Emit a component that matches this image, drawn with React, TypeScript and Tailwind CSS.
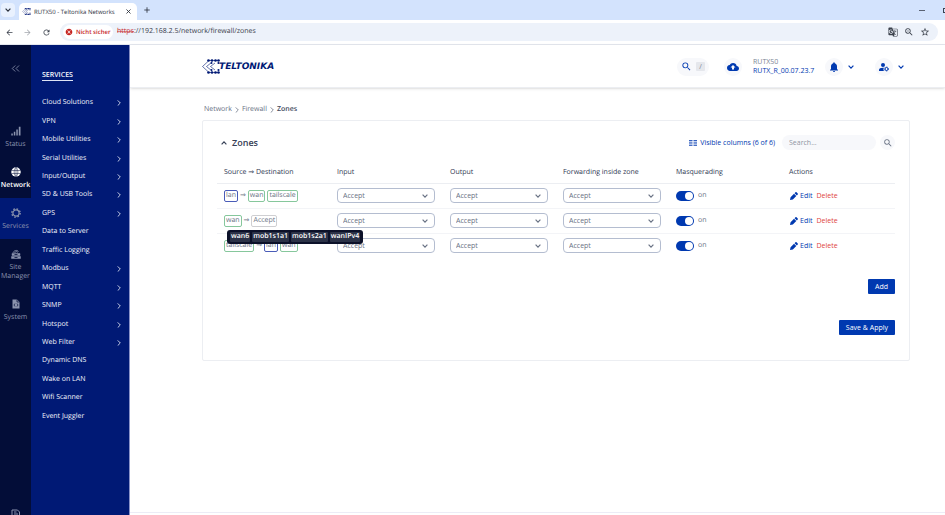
import type { ReactNode } from 'react';
import { ChevronsLeft, Plus, X } from 'lucide-react';
import {
  MdArrowBack,
  MdArrowForward,
  MdCancel,
  MdCloudUpload,
  MdGTranslate,
  MdNotifications,
  MdRefresh,
  MdSearch,
  MdStarBorder,
  MdZoomOut,
} from 'react-icons/md';
import { clsx } from 'clsx';

type Tone = 'blue' | 'green' | 'gray';

interface Badge {
  label: string;
  tone: Tone;
}

interface Zone {
  source: Badge;
  targets: Badge[];
  tooltip?: string[];
}

const zones: Zone[] = [
  {
    source: { label: 'lan', tone: 'blue' },
    targets: [
      { label: 'wan', tone: 'green' },
      { label: 'tailscale', tone: 'green' },
    ],
  },
  {
    source: { label: 'wan', tone: 'green' },
    targets: [{ label: 'Accept', tone: 'gray' }],
    tooltip: ['wan6', 'mob1s1a1', 'mob1s2a1', 'wanIPv4'],
  },
  {
    source: { label: 'tailscale', tone: 'green' },
    targets: [
      { label: 'lan', tone: 'blue' },
      { label: 'wan', tone: 'green' },
    ],
  },
];

const services = [
  { label: 'Cloud Solutions', nested: true },
  { label: 'VPN', nested: true },
  { label: 'Mobile Utilities', nested: true },
  { label: 'Serial Utilities', nested: true },
  { label: 'Input/Output', nested: true },
  { label: 'SD & USB Tools', nested: true },
  { label: 'GPS', nested: true },
  { label: 'Data to Server', nested: false },
  { label: 'Traffic Logging', nested: false },
  { label: 'Modbus', nested: true },
  { label: 'MQTT', nested: true },
  { label: 'SNMP', nested: true },
  { label: 'Hotspot', nested: true },
  { label: 'Web Filter', nested: true },
  { label: 'Dynamic DNS', nested: false },
  { label: 'Wake on LAN', nested: false },
  { label: 'Wifi Scanner', nested: false },
  { label: 'Event Juggler', nested: false },
];

const columns = [
  'Source ⇒ Destination',
  'Input',
  'Output',
  'Forwarding inside zone',
  'Masquerading',
  'Actions',
];

export default function App() {
  return (
    <div className="flex h-screen flex-col overflow-hidden bg-white font-['Open_Sans',sans-serif] text-[7px] leading-[10px] text-[#697284] [text-rendering:geometricPrecision]">
      <TabStrip />
      <Toolbar />
      <div className="flex min-h-0 flex-1">
        <Rail />
        <ServicesMenu />
        <div className="flex min-w-0 flex-1 flex-col">
          <Header />
          <main className="flex-1 pr-[35px] pl-[72px]">
            <nav aria-label="Breadcrumb" className="mt-[17px] mb-[5px] flex items-center gap-[3px] pl-0.5">
              <a href="#network">Network</a>
              <RightChevron />
              <a href="#firewall">Firewall</a>
              <RightChevron />
              <span className="font-semibold text-[#3f495d]">Zones</span>
            </nav>
            <ZonesCard />
          </main>
          <footer className="h-[3px] border-t border-[#ececf6]" />
        </div>
      </div>
    </div>
  );
}

function RightChevron() {
  return (
    <svg viewBox="0 0 4 6" className="h-[6px] w-1" fill="none" stroke="currentColor" strokeWidth=".8" aria-hidden="true">
      <path d="M.7.4 3.300 3 .7 5.600" />
    </svg>
  );
}

function DownChevron({ className }: { className?: string }) {
  return (
    <svg
      viewBox="0 0 6 4"
      className={clsx('h-1 w-[6px]', className)}
      fill="none"
      stroke="currentColor"
      strokeWidth="1.2"
      aria-hidden="true"
    >
      <path d="M.6.7 3 3.100 5.400.7" />
    </svg>
  );
}

/* Browser chrome */

function TabStrip() {
  return (
    <div className="flex h-5 shrink-0 items-end bg-[#d3e3fd] text-[6px] text-[#2b313d]">
      <button
        type="button"
        aria-label="Search tabs"
        className="mb-[3px] ml-px flex size-[14px] items-center justify-center rounded-[4px] bg-[#e9f1fe]"
      >
        <DownChevron />
      </button>
      <div className="ml-1 flex h-[17px] w-[118px] items-center rounded-t-[5px] bg-white pr-[5px] pl-[3px]">
        <TeltonikaMark className="h-[7px] w-[9px]" />
        <span className="ml-[3px] flex-1 whitespace-nowrap">RUTX50 - Teltonika Networks</span>
        <button type="button" aria-label="Close tab">
          <X className="size-[7px]" strokeWidth={3} />
        </button>
      </div>
      <button type="button" aria-label="New tab" className="mb-[6px] ml-[6px]">
        <Plus className="size-2" strokeWidth={2.5} />
      </button>
      <div className="mb-[5px] ml-auto flex items-center">
        <button type="button" aria-label="Minimize" className="flex h-[10px] w-[6px] items-center">
          <span className="h-px w-full bg-[#5a6272]" />
        </button>
        <button type="button" aria-label="Maximize" className="ml-[18px] h-[5px] w-[2px] border-y border-l border-[#3b4252]" />
      </div>
    </div>
  );
}

function Toolbar() {
  return (
    <div className="flex h-[25px] shrink-0 items-center border-b border-[#e4e7ee] pr-[7px] pl-[5px] text-[#3b414c]">
      <button type="button" aria-label="Back">
        <MdArrowBack className="size-[9px]" />
      </button>
      <button type="button" aria-label="Forward" className="ml-[9px] text-[#a4a8ae]">
        <MdArrowForward className="size-[9px]" />
      </button>
      <button type="button" aria-label="Reload" className="ml-[10px]">
        <MdRefresh className="size-[9px]" />
      </button>
      <div className="ml-[9px] flex h-[18px] flex-1 items-center rounded-full bg-[#edf2fa] pr-2 pl-[3px]">
        <span className="flex h-[14px] w-[50px] items-center gap-[3px] rounded-full bg-white pl-[2px] text-[6px] font-semibold whitespace-nowrap text-[#c5221f]">
          <MdCancel className="size-2" />
          Nicht sicher
        </span>
        <span className="ml-1 flex-1">
          <span className="text-[#c5221f] line-through decoration-[#c5221f]/50">https</span>
          ://192.168.2.5/network/firewall/zones
        </span>
        <button type="button" aria-label="Translate">
          <MdGTranslate className="size-[10px]" />
        </button>
        <button type="button" aria-label="Zoom" className="ml-[6px]">
          <MdZoomOut className="size-[10px]" />
        </button>
        <button type="button" aria-label="Bookmark" className="ml-[6px]">
          <MdStarBorder className="size-[10px]" />
        </button>
      </div>
    </div>
  );
}

/* Left navigation */

function Rail() {
  return (
    <nav aria-label="Main" className="flex w-[31px] shrink-0 flex-col bg-[#030d38] text-[#8b93ae]">
      <button type="button" aria-label="Collapse menu" className="mt-[17px] mb-[41px] flex justify-center">
        <ChevronsLeft className="size-[13px]" strokeWidth={1.5} />
      </button>
      <RailItem label="Status">
        <svg viewBox="0 0 10 10" className="size-[10px]" fill="currentColor">
          <path d="M.3 7.500h1.500V9.500H.3zM2.800 5.800h1.500v3.700H2.800zM5.300 3.500h1.500v6H5.300zM7.800.8h1.700v8.700H7.800z" />
        </svg>
      </RailItem>
      <RailItem label="Network" className="font-semibold text-white">
        <svg viewBox="0 0 20 20" className="size-[10px]">
          <circle cx="10" cy="10" r="9.500" fill="currentColor" />
          <path
            d="M1 7h18M1 13h18M10 0v20M10 1C5 5 5 15 10 19M10 1c5 4 5 14 0 18"
            fill="none"
            stroke="#030d38"
            strokeWidth="1"
          />
        </svg>
      </RailItem>
      <RailItem label="Services" className="bg-[#001975]">
        <svg viewBox="0 0 20 20" className="size-[10px]" fill="none" stroke="currentColor">
          <circle cx="10" cy="10" r="6.200" strokeWidth="2.400" />
          <circle cx="10" cy="10" r="8.400" strokeWidth="2.600" strokeDasharray="3.300 3.300" />
        </svg>
      </RailItem>
      <RailItem label="Site Manager">
        <svg viewBox="0 0 20 20" className="size-[10px]" fill="none" stroke="currentColor">
          <path d="M4 8C5 3 12 1 15 5M7 8c1-3 5-4 7-1" strokeWidth="1.700" />
          <path d="M2 9h16v4H2zM1 15h18v4H1z" fill="currentColor" />
          <path d="M7 11h6M7 17h6" stroke="#030d38" strokeWidth="1.600" />
        </svg>
      </RailItem>
      <RailItem label="System">
        <svg viewBox="0 0 20 20" className="size-[10px]">
          <path d="M3 1h9l5 5v13H3z" fill="currentColor" />
          <path d="M12 1v5h5M8 9l-2 3 2 3M12 9l2 3-2 3" fill="none" stroke="#030d38" strokeWidth="1.400" />
        </svg>
      </RailItem>
      <div className="mt-auto flex h-[6px] justify-center">
        <svg viewBox="0 0 20 20" className="size-[10px] shrink-0" fill="none" stroke="currentColor" strokeWidth="2">
          <path d="M2 2h11l4 4v13H2zM6 6h5M6 10h8M6 14h8" />
        </svg>
      </div>
    </nav>
  );
}

function RailItem({ label, className, children }: { label: string; className?: string; children: ReactNode }) {
  return (
    <a
      href="#section"
      className={clsx('flex flex-col items-center gap-1 pt-[10px] pb-2 text-center leading-[9px]', className)}
    >
      {children}
      {label}
    </a>
  );
}

function ServicesMenu() {
  return (
    <aside className="w-[99px] shrink-0 border-r border-[#8a92c8] bg-[#001975] font-medium text-[#f3f5fc]">
      <h2 className="mt-[26px] ml-[11px] w-fit border-b border-[#dfe4f5] leading-[9px] font-semibold">SERVICES</h2>
      <ul className="mt-[13px] grid h-[332px] auto-rows-fr">
        {services.map((item) => (
          <li key={item.label} className="flex">
            <a href="#service" className="flex flex-1 items-center justify-between pr-2 pl-[11px]">
              {item.label}
              {item.nested && <RightChevron />}
            </a>
          </li>
        ))}
      </ul>
    </aside>
  );
}

/* Page header */

function Header() {
  return (
    <header className="flex h-[43px] shrink-0 items-center border-b border-[#eceef2] pt-px pr-[41px] pl-[72px] text-[#0039b0] shadow-sm">
      <a href="#home" aria-label="Teltonika" className="flex items-center text-[#001975]">
        <TeltonikaMark className="h-[15px] w-[18px]" />
        <span className="-ml-px font-['DejaVu_Sans',sans-serif] text-[9px] leading-[12px] font-bold italic">TELTONIKA</span>
      </a>
      <button type="button" aria-label="Search" className="ml-auto flex h-[18px] w-8 items-center justify-center gap-1 rounded-full bg-[#f7f8fb]">
        <MdSearch className="size-[11px]" />
        <kbd className="flex size-[9px] items-center justify-center rounded-[1px] bg-[#e5e7ec] font-[inherit] text-[#7b8494]">/</kbd>
      </button>
      <button type="button" aria-label="Update" className="ml-[15px] flex size-[18px] items-center justify-center rounded-full bg-[#f7f8fb]">
        <MdCloudUpload className="size-3" />
      </button>
      <div className="ml-[11px] w-[72px] leading-[9px]">
        <div className="text-[#7b8494]">RUTX50</div>
        <div className="font-medium">RUTX_R_00.07.23.7</div>
      </div>
      <button type="button" aria-label="Notifications" className="flex items-center gap-[5px]">
        <span className="flex size-[18px] items-center justify-center rounded-full bg-[#f7f8fb]">
          <MdNotifications className="size-3" />
        </span>
        <DownChevron />
      </button>
      <button type="button" aria-label="Account" className="ml-[21px] flex items-center gap-[5px]">
        <span className="flex size-[18px] items-center justify-center rounded-full bg-[#f7f8fb]">
          <svg viewBox="0 0 20 20" className="size-[10px]">
            <circle cx="8" cy="6" r="4" fill="currentColor" />
            <path d="M0 18v-2c0-3 3-4.500 8-4.500h2c-1.500 2-1.500 4.500 0 6.500z" fill="currentColor" />
            <circle cx="15" cy="14" r="3" fill="none" stroke="currentColor" strokeWidth="2" />
            <circle cx="15" cy="14" r="4.200" fill="none" stroke="currentColor" strokeWidth="1.400" strokeDasharray="2.200 2.200" />
          </svg>
        </span>
        <DownChevron />
      </button>
    </header>
  );
}

function TeltonikaMark({ className }: { className: string }) {
  return (
    <svg viewBox="0 0 36 30" className={className} fill="none" stroke="#001975" strokeWidth="1.200">
      <path d="M13 4 1 15l12 11M19 7 9 15l10 8M26 8l-9 7 9 7" />
      <path d="M12 3h21M12 27h21" />
      <g fill="#001975" stroke="none">
        <circle cx="13" cy="3" r="2.700" />
        <circle cx="20" cy="3" r="2.700" />
        <circle cx="27" cy="3" r="2.700" />
        <circle cx="33" cy="3" r="2.700" />
        <circle cx="19" cy="8" r="2" />
        <circle cx="33" cy="8" r="2.200" />
        <circle cx="19" cy="22" r="2" />
        <circle cx="33" cy="22" r="2.200" />
        <circle cx="13" cy="27" r="2.700" />
        <circle cx="20" cy="27" r="2.700" />
        <circle cx="27" cy="27" r="2.700" />
        <circle cx="33" cy="27" r="2.700" />
      </g>
    </svg>
  );
}

/* Zones table */

function ZonesCard() {
  return (
    <section className="rounded-[2px] border border-[#eceef2] px-[14px] pt-[14px] pb-[25px]">
      <div className="flex h-[15px] items-center">
        <button type="button" className="ml-1 flex items-center gap-[5px] text-[9px] font-semibold text-[#364056]">
          <DownChevron className="rotate-180" />
          Zones
        </button>
        <button type="button" className="ml-auto flex items-center gap-[3px] font-medium text-[#0039b0]">
          <svg viewBox="0 0 8 6" className="h-[6px] w-2" fill="none" stroke="currentColor" strokeWidth=".8">
            <path d="M0 .5h3.500M4.500 .5H8M0 2.200h3.500M4.500 2.200H8M0 3.900h3.500M4.500 3.900H8M0 5.600h3.500M4.500 5.600H8" />
          </svg>
          Visible columns (6 of 6)
        </button>
        <input
          type="search"
          aria-label="Search zones"
          placeholder="Search..."
          className="ml-[7px] h-[15px] w-[94px] rounded-full bg-[#f7f8fb] px-[7px] placeholder:text-[#8f96a3]"
        />
        <button type="button" aria-label="Search" className="ml-1 flex size-[15px] items-center justify-center rounded-full bg-[#f7f8fb]">
          <MdSearch className="size-[10px]" />
        </button>
      </div>

      <table className="mt-[11px] w-full table-fixed border-collapse">
        <thead>
          <tr className="h-[22px] border-b border-[#eceef2] text-left text-[#2c3650]">
            {columns.map((column) => (
              <th key={column} className="pt-[2px] pl-[7px] font-medium whitespace-nowrap">
                {column}
              </th>
            ))}
          </tr>
        </thead>
        <tbody>
          {zones.map((zone) => (
            <ZoneRow key={zone.source.label} zone={zone} />
          ))}
        </tbody>
      </table>

      <div className="mt-[21px] flex flex-col items-end gap-[26px]">
        <PrimaryButton>Add</PrimaryButton>
        <PrimaryButton>Save &amp; Apply</PrimaryButton>
      </div>
    </section>
  );
}

function ZoneRow({ zone }: { zone: Zone }) {
  const name = zone.source.label;

  return (
    <tr className="h-[25px] border-b border-[#f3f4f7] last:border-b-0">
      <td className="pl-[7px]">
        <div className="relative flex items-center gap-[2px]">
          <ZoneBadge {...zone.source} />
          <span>⇒</span>
          {zone.targets.map((target) => (
            <ZoneBadge key={target.label} {...target} />
          ))}
          {zone.tooltip && (
            <div
              role="tooltip"
              className="absolute top-[15px] left-[3px] z-10 flex gap-[2px] rounded-[3px] bg-[#0c1129] px-[3px] py-[2px] font-semibold text-white"
            >
              {zone.tooltip.map((iface) => (
                <span key={iface} className="rounded-[1px] bg-[#2b3247] px-px">
                  {iface}
                </span>
              ))}
            </div>
          )}
        </div>
      </td>
      {['Input', 'Output', 'Forwarding'].map((field) => (
        <td key={field} className="pr-2 pl-[7px]">
          <div className="relative">
            <select
              aria-label={`${field} policy for ${name}`}
              className="block h-[15px] w-full appearance-none rounded-[4px] border border-[#b4bdd0] bg-white pl-[5px]"
            >
              <option>Accept</option>
              <option>Reject</option>
              <option>Drop</option>
            </select>
            <DownChevron className="pointer-events-none absolute top-[6px] right-[7px]" />
          </div>
        </td>
      ))}
      <td className="pl-[7px]">
        <label className="flex items-center gap-1">
          <input
            type="checkbox"
            defaultChecked
            className="flex h-[10px] w-[18px] appearance-none items-center rounded-full bg-[#c3c9d5] p-px before:size-2 before:rounded-full before:bg-white checked:justify-end checked:bg-[#0039b0]"
          />
          on
        </label>
      </td>
      <td className="pl-2">
        <div className="flex items-center gap-1">
          <button type="button" className="flex items-center gap-[2px] font-medium text-[#0039b0]">
            <svg viewBox="0 0 14 14" className="size-2" fill="currentColor">
              <path d="M0 14l1-5 6-6 4 4-6 6zM8 2l1.500-1.500a1.500 1.500 0 0 1 2 0l2 2a1.500 1.500 0 0 1 0 2L12 6z" />
            </svg>
            Edit
          </button>
          <button type="button" className="text-[#e0443e]">
            Delete
          </button>
        </div>
      </td>
    </tr>
  );
}

function ZoneBadge({ label, tone }: Badge) {
  return (
    <span
      className={clsx(
        'rounded-[2px] border px-px',
        tone === 'blue' && 'border-[#4a5cb8]',
        tone === 'green' && 'border-[#86c79c]',
        tone === 'gray' && 'border-[#cfcfd2]',
      )}
    >
      {label}
    </span>
  );
}

function PrimaryButton({ children }: { children: ReactNode }) {
  return (
    <button type="button" className="h-[15px] rounded-[1px] bg-[#0039b0] px-[7px] font-medium text-white">
      {children}
    </button>
  );
}
